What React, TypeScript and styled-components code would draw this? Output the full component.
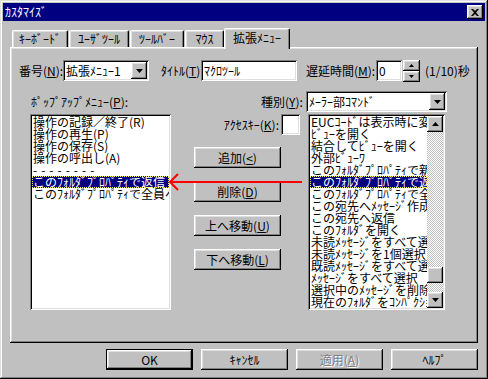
import React from "react";
import styled, { createGlobalStyle, css } from "styled-components";

const GlobalStyle = createGlobalStyle`
  html, body { margin: 0; padding: 0; background: #c0c0c0; }
  body {
    font-family: "Noto Sans CJK JP", "Noto Sans", sans-serif;
    font-size: 12px;
    color: #000;
  }
`;

// win95 bevels
const raised = css`
  box-shadow: inset -1px -1px #000, inset 1px 1px #fff, inset -2px -2px #808080, inset 2px 2px #dfdfdf;
`;
const sunken = css`
  box-shadow: inset 1px 1px #808080, inset -1px -1px #fff, inset 2px 2px #000, inset -2px -2px #dfdfdf;
`;

const Window = styled.div`
  width: 488px;
  height: 379px;
  box-sizing: border-box;
  background: #c0c0c0;
  box-shadow: inset -1px -1px #000, inset 1px 1px #dfdfdf, inset -2px -2px #808080, inset 2px 2px #fff;
  padding: 3px;
  display: flex;
  flex-direction: column;
`;

const TitleBar = styled.div`
  height: 18px;
  background: #000080;
  color: #fff;
  display: flex;
  align-items: center;
  justify-content: space-between;
  padding: 0 2px;
  line-height: 12px;
`;

const CloseBtn = styled.div`
  width: 16px;
  height: 14px;
  background: #c0c0c0;
  ${raised};
  display: flex;
  align-items: center;
  justify-content: center;
`;

const Body = styled.div`
  padding: 0 7px;
  display: flex;
  flex-direction: column;
`;

const TabStrip = styled.div`
  margin-top: 7px;
  height: 19px;
  padding-left: 2px;
  display: flex;
  align-items: flex-end;
`;

const Tab = styled.div<{ $w: number; $active?: boolean }>`
  width: ${(p) => p.$w}px;
  height: 17px;
  box-sizing: border-box;
  margin-left: ${(p) => (p.$active ? 0 : 1)}px;
  &:first-child { margin-left: 0; }
  display: flex;
  align-items: center;
  justify-content: center;
  line-height: 12px;
  border-top: 1px solid #fff;
  border-left: 1px solid #fff;
  border-right: 1px solid #000;
  border-radius: 2px 2px 0 0;
  box-shadow: inset -1px 0 #808080, inset 1px 1px #dfdfdf;
  background: #c0c0c0;
  ${(p) =>
    p.$active &&
    css`
      height: 21px;
      margin-bottom: -2px;
      padding-bottom: 2px;
      position: relative;
      z-index: 1;
    `}
`;

const Panel = styled.div`
  height: 296px;
  box-sizing: border-box;
  ${raised};
  padding: 13px 9px 0 9px;
  display: flex;
  flex-direction: column;
`;

const Row = styled.div<{ $mt?: number; $pl?: number }>`
  display: flex;
  align-items: center;
  height: 21px;
  margin-top: ${(p) => p.$mt ?? 0}px;
  padding-left: ${(p) => p.$pl ?? 0}px;
`;

const Label = styled.span<{ $w?: number; $ml?: number }>`
  flex-shrink: 0;
  width: ${(p) => (p.$w ? `${p.$w}px` : "auto")};
  margin-left: ${(p) => p.$ml ?? 0}px;
  white-space: nowrap;
  line-height: 12px;
`;

const Field = styled.div<{ $w: number; $ml?: number }>`
  flex-shrink: 0;
  width: ${(p) => p.$w}px;
  height: 21px;
  margin-left: ${(p) => p.$ml ?? 0}px;
  box-sizing: border-box;
  background: #fff;
  ${sunken};
  padding: 2px 2px 2px 3px;
  display: flex;
  align-items: center;
  white-space: nowrap;
  line-height: 12px;
`;

const FieldText = styled.span`
  flex: 1;
`;

const ArrowBtn = styled.div<{ $w?: number; $h?: number }>`
  flex-shrink: 0;
  width: ${(p) => p.$w ?? 16}px;
  height: ${(p) => p.$h ?? 17}px;
  box-sizing: border-box;
  background: #c0c0c0;
  ${raised};
  display: flex;
  align-items: center;
  justify-content: center;
`;

const Spin = styled.div`
  flex-shrink: 0;
  margin-left: 1px;
  display: flex;
  flex-direction: column;
`;

const Split = styled.div`
  display: flex;
  margin-top: 2px;
  padding-left: 11px;
  position: relative;
`;

const ListBox = styled.div<{ $w: number; $ml?: number }>`
  width: ${(p) => p.$w}px;
  height: 196px;
  margin-left: ${(p) => p.$ml ?? 0}px;
  box-sizing: border-box;
  flex-shrink: 0;
  background: #fff;
  ${sunken};
  padding: 2px;
  display: flex;
`;

const Items = styled.div`
  flex: 1;
  overflow: hidden;
`;

const Item = styled.div<{ $sel?: boolean }>`
  height: 12px;
  line-height: 12px;
  padding-left: 1px;
  white-space: nowrap;
  ${(p) =>
    p.$sel &&
    css`
      background: #000080;
      color: #fff;
      outline: 1px dotted #ffff60;
      outline-offset: -1px;
    `}
`;

const Dashes = styled.span`
  letter-spacing: 4px;
`;

const Middle = styled.div`
  width: 106px;
  margin-left: 23px;
  flex-shrink: 0;
  display: flex;
  flex-direction: column;
`;

const AccessRow = styled.div`
  display: flex;
  align-items: center;
  justify-content: flex-end;
  height: 21px;
`;

const ButtonStack = styled.div`
  margin-top: 12px;
  display: flex;
  flex-direction: column;
  gap: 13px;
`;

const Button = styled.div<{ $default?: boolean; $disabled?: boolean }>`
  width: 87px;
  height: 21px;
  box-sizing: border-box;
  background: #c0c0c0;
  ${raised};
  display: flex;
  align-items: center;
  justify-content: center;
  line-height: 12px;
  white-space: nowrap;
  ${(p) =>
    p.$default &&
    css`
      border: 1px solid #000;
    `}
  ${(p) =>
    p.$disabled &&
    css`
      color: #808080;
      text-shadow: 1px 1px #fff;
    `}
`;

const ScrollBar = styled.div`
  width: 16px;
  display: flex;
  flex-direction: column;
`;

const Track = styled.div`
  flex: 1;
  background: repeating-conic-gradient(#c0c0c0 0% 25%, #fff 0% 50%) 0 0 / 2px 2px;
`;

const Thumb = styled.div`
  margin-top: 135px;
  width: 16px;
  height: 16px;
  box-sizing: border-box;
  background: #c0c0c0;
  ${raised};
`;

const RedArrow = styled.svg`
  position: absolute;
  left: 149px;
  top: 58px;
  overflow: visible;
`;

const Footer = styled.div`
  margin-top: 6px;
  display: flex;
  justify-content: flex-end;
  gap: 8px;
`;

const Down = ({ w = 7 }: { w?: number }) => (
  <svg width={w} height={Math.ceil(w / 2)} viewBox={`0 0 ${w} ${Math.ceil(w / 2)}`}>
    <polygon points={`0,0 ${w},0 ${w / 2},${Math.ceil(w / 2)}`} fill="#000" />
  </svg>
);

const Up = ({ w = 7 }: { w?: number }) => (
  <svg width={w} height={Math.ceil(w / 2)} viewBox={`0 0 ${w} ${Math.ceil(w / 2)}`}>
    <polygon points={`0,${Math.ceil(w / 2)} ${w},${Math.ceil(w / 2)} ${w / 2},0`} fill="#000" />
  </svg>
);

const leftItems = [
  "操作の記録／終了(R)",
  "操作の再生(P)",
  "操作の保存(S)",
  "操作の呼出し(A)",
];

const rightItems = [
  "EUCｺｰﾄﾞは表示時に変換",
  "ﾋﾞｭｰを開く",
  "結合してﾋﾞｭｰを開く",
  "外部ﾋﾞｭｰﾜ",
  "このﾌｫﾙﾀﾞﾌﾟﾛﾊﾟﾃｨで新規",
  "このﾌｫﾙﾀﾞﾌﾟﾛﾊﾟﾃｨで返信",
  "このﾌｫﾙﾀﾞﾌﾟﾛﾊﾟﾃｨで全員へ",
  "この宛先へﾒｯｾｰｼﾞ作成",
  "この宛先へ返信",
  "このﾌｫﾙﾀﾞを開く",
  "未読ﾒｯｾｰｼﾞをすべて選択",
  "未読ﾒｯｾｰｼﾞを1個選択",
  "既読ﾒｯｾｰｼﾞをすべて選択",
  "ﾒｯｾｰｼﾞをすべて選択",
  "選択中のﾒｯｾｰｼﾞを削除",
  "現在のﾌｫﾙﾀﾞをｺﾝﾊﾟｸｼｮﾝ",
];

const tabs = [
  { t: "ｷｰﾎﾞｰﾄﾞ", w: 56 },
  { t: "ﾕｰｻﾞﾂｰﾙ", w: 60 },
  { t: "ﾂｰﾙﾊﾞｰ", w: 54 },
  { t: "ﾏｳｽ", w: 39 },
  { t: "拡張ﾒﾆｭｰ", w: 66, active: true },
];

const App: React.FC = () => {
  return (
    <>
      <GlobalStyle />
      <Window>
        <TitleBar>
          <span>ｶｽﾀﾏｲｽﾞ</span>
          <CloseBtn>
            <svg width="8" height="7" viewBox="0 0 8 7">
              <path d="M0 0 L2 0 L4 2 L6 0 L8 0 L5 3.5 L8 7 L6 7 L4 5 L2 7 L0 7 L3 3.5 Z" fill="#000" />
            </svg>
          </CloseBtn>
        </TitleBar>
        <Body>
          <TabStrip>
            {tabs.map((tb) => (
              <Tab key={tb.t} $w={tb.w} $active={tb.active}>
                {tb.t}
              </Tab>
            ))}
          </TabStrip>
          <Panel>
            <Row>
              <Label $w={44}>番号(<u>N</u>):</Label>
              <Field $w={86}>
                <FieldText>拡張ﾒﾆｭｰ1</FieldText>
                <ArrowBtn><Down /></ArrowBtn>
              </Field>
              <Label $w={40} $ml={12}>ﾀｲﾄﾙ(<u>T</u>):</Label>
              <Field $w={96}><FieldText>ﾏｸﾛﾂｰﾙ</FieldText></Field>
              <Label $w={70} $ml={9}>遅延時間(<u>M</u>):</Label>
              <Field $w={26}><FieldText>0</FieldText></Field>
              <Spin>
                <ArrowBtn $w={17} $h={11}><Up w={5} /></ArrowBtn>
                <ArrowBtn $w={17} $h={11}><Down w={5} /></ArrowBtn>
              </Spin>
              <Label $ml={5}>(1/10)秒</Label>
            </Row>
            <Row $mt={10} $pl={12}>
              <Label $w={230}>ﾎﾟｯﾌﾟｱｯﾌﾟﾒﾆｭｰ(<u>P</u>):</Label>
              <Label $w={45}>種別(<u>Y</u>):</Label>
              <Field $w={141}>
                <FieldText>ﾒｰﾗｰ部ｺﾏﾝﾄﾞ</FieldText>
                <ArrowBtn><Down /></ArrowBtn>
              </Field>
            </Row>
            <Split>
              <ListBox $w={141}>
                <Items>
                  {leftItems.map((it) => (
                    <Item key={it}>{it}</Item>
                  ))}
                  <Item><Dashes>--------</Dashes></Item>
                  <Item $sel>このﾌｫﾙﾀﾞﾌﾟﾛﾊﾟﾃｨで返信</Item>
                  <Item>このﾌｫﾙﾀﾞﾌﾟﾛﾊﾟﾃｨで全員へ</Item>
                </Items>
              </ListBox>
              <Middle>
                <AccessRow>
                  <Label>ｱｸｾｽｷｰ(<u>K</u>):</Label>
                  <Field $w={19} $ml={2} />
                </AccessRow>
                <ButtonStack>
                  <Button>追加(<u>&lt;</u>)</Button>
                  <Button>削除(<u>D</u>)</Button>
                  <Button>上へ移動(<u>U</u>)</Button>
                  <Button>下へ移動(<u>L</u>)</Button>
                </ButtonStack>
              </Middle>
              <ListBox $w={137} $ml={8}>
                <Items>
                  {rightItems.map((it, i) => (
                    <Item key={it} $sel={i === 5}>{it}</Item>
                  ))}
                </Items>
                <ScrollBar>
                  <ArrowBtn $h={16}><Up /></ArrowBtn>
                  <Track><Thumb /></Track>
                  <ArrowBtn $h={16}><Down /></ArrowBtn>
                </ScrollBar>
              </ListBox>
              <RedArrow width="136" height="20" viewBox="0 0 136 20">
                <path d="M2 10 H134" stroke="#f00" strokeWidth="2" fill="none" />
                <path d="M10 2 L2 10 L10 18" stroke="#f00" strokeWidth="2" fill="none" />
              </RedArrow>
            </Split>
          </Panel>
          <Footer>
            <Button $default>OK</Button>
            <Button>ｷｬﾝｾﾙ</Button>
            <Button $disabled>適用(<u>A</u>)</Button>
            <Button>ﾍﾙﾌﾟ</Button>
          </Footer>
        </Body>
      </Window>
    </>
  );
};

export default App;
